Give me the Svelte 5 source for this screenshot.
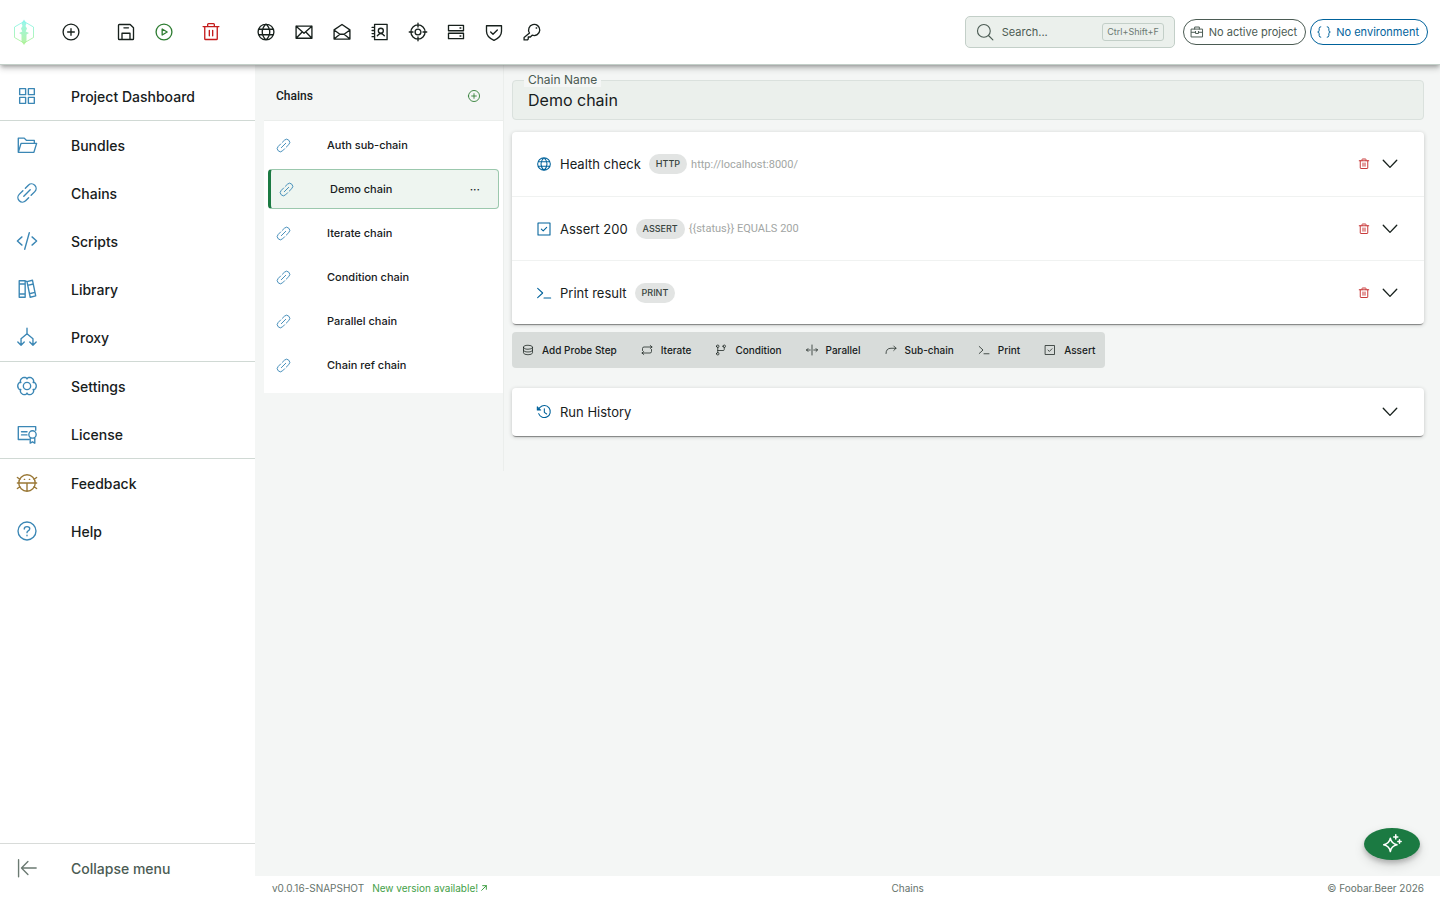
<script lang="ts">
  interface Step { name: string; icon: string; kind: string; detail: string; }

  const circle = (x: number, y: number, r: number) =>
    `M${x - r} ${y}a${r} ${r} 0 1 0 ${r * 2} 0a${r} ${r} 0 1 0 ${-r * 2} 0Z`;

  // six-lobed cog outline
  function cog() {
    const pts: string[] = [];
    for (let a = 0; a < 360; a += 5) {
      const t = (a * Math.PI) / 180;
      const r = 7.7 + 2.4 * Math.sqrt(Math.abs(Math.cos(3 * t)));
      pts.push(`${(12 + r * Math.cos(t)).toFixed(2)} ${(12 + r * Math.sin(t)).toFixed(2)}`);
    }
    return `M${pts.join('L')}Z`;
  }

  const ICONS: Record<string, string> = {
    plus: circle(12, 12, 9.5) + 'M12 8v8M8 12h8',
    save: 'M3 4q0-1 1-1H17l4 4V20q0 1-1 1H4q-1 0-1-1ZM7.2 21V13.500h9.600v7.500M9.500 7h5.500',
    play: circle(12, 12, 9.5) + 'M9.8 8.4v7.2l6-3.6Z',
    trash: 'M2.500 5.500h19M4.500 5.500V20q0 1 1 1h13q1 0 1-1V5.500M8 5.500V3q0-1 1-1h6q1 0 1 1v2.500M10 10v6.500M14 10v6.500',
    globe: circle(12, 12, 9.5) + 'M3.5 8.7h17M3.5 15.3h17M12 2.5c-6 5.5-6 13.5 0 19c6-5.5 6-13.5 0-19Z',
    mail: 'M2.500 5h19v14.500h-19ZM2.500 5l9.500 8.500L21.500 5M2.800 19.200l7-7.200M21.200 19.200l-7-7.200',
    mailOpen: 'M2.500 9.500L12 3l9.500 6.500V20.500h-19ZM2.500 9.500l7 5.200h5l7-5.200M2.800 20.200l6.700-5.500M21.200 20.200l-6.700-5.500',
    contacts: 'M5.500 2.800h15v18.400h-15ZM2.500 6.500h3M2.500 10.200h3M2.500 13.900h3M2.500 17.600h3M8.800 16.500q4.200-5.500 8.400 0' + circle(13, 10.5, 3),
    target: circle(12, 12, 8.5) + circle(12, 12, 3.5) + 'M12 1.500v4.500M12 18v4.500M1.500 12h4.500M18 12h4.500',
    server: 'M3 4h18v6.500h-18ZM3 13.500h18V20h-18ZM16.800 7.200h1M16.800 16.800h1',
    shield: 'M3 4.500h18v6.500c0 6-4.500 9-9 11c-4.500-2-9-5-9-11ZM8 12l2.800 2.800L16 9.500',
    key: 'M9 13.200a6.700 6.700 0 1 1 3.200 2.600L10 18H7.500v2.500L6.500 21.500H2.500V18.500ZM17 7.200h.6',
    search: circle(10.5, 10.5, 8.5) + 'M17 17l5.500 5.500',
    briefcase: 'M2.500 7h19v13.500h-19ZM8 7V3.500h8V7M2.500 12.500h7M14.500 12.500h7M9.500 11v3.500h5V11',
    braces: 'M6.500 3q-2.800 0-2.800 3v3q0 3-2.500 3q2.500 0 2.500 3v3q0 3 2.800 3M17.500 3q2.800 0 2.800 3v3q0 3 2.500 3q-2.500 0-2.500 3v3q0 3-2.800 3',
    grid: 'M4 4h6.500v6.500H4ZM13.500 4H20v6.500h-6.500ZM4 13.500h6.500V20H4ZM13.500 13.500H20V20h-6.500Z',
    folder: 'M2.500 20V4.500H9l2.500 2.500h8.500v3M2.500 20l3-9.800h17L19.500 20Z',
    link: 'M10.200 6.800L13.500 3.500a4.950 4.950 0 0 1 7 7L16.500 14.500M13.800 17.200L10.500 20.500a4.950 4.950 0 0 1-7-7L7.500 9.500M8.500 15.500l7-7',
    code: 'M6.500 7.500L1.500 12l5 4.500M17.500 7.500l5 4.500l-5 4.500M14.500 3l-5 18',
    books: 'M3.500 3h6.500v18H3.500ZM3.500 6.500h6.500M3.500 17.500h6.500M12 4l6-1.500l3.500 17l-6 1.500ZM12.800 8l6-1.500M14.600 17.200l6-1.500M10 3l2 1',
    split: 'M12 2.500v6M12 8.500l-6.500 5.500v7M12 8.500l6.500 5.500v7M2 17.500l3.500 3.500L9 17.500M15 17.500l3.500 3.500l3.500-3.500',
    cog: cog() + circle(12, 12, 4),
    license: 'M14 18H2.500V4h19v4M6 9.500h6M6 13h6' + circle(18, 12.5, 4) + 'M15.500 16v6l2.500-1.500l2.500 1.500V16',
    bug: circle(12, 12, 9) + 'M1.500 12h21M12 12v9M9 8h.5M14.500 8h.5M1.500 6l3 2M22.500 6l-3 2M1.500 18l3-2M22.500 18l-3-2',
    help: circle(12, 12, 9.8) + 'M9 9.800q0-2.600 3-2.600t3 2.400q0 1.400-1.700 2.200q-1.300.6-1.300 2M12 16.600v.6',
    collapse: 'M2.800 3v18.500M22 12H6.500M13 5l-7 7l7 7',
    check: 'M3 3h18v18h-18ZM8 12.200l2.800 2.600L16 9.500',
    prompt: 'M2.500 5l7.500 7l-7.500 7M12 19.500h10',
    chevron: 'M3 7L12 16.500l9-9.500',
    database: 'M3 6.500a9 4 0 0 1 18 0a9 4 0 0 1-18 0ZM3 6.500v11a9 4 0 0 0 18 0v-11M3 12a9 4 0 0 0 18 0',
    repeat: 'M3 13V9q0-3 3-3H22M18.500 3l3.500 3l-3.500 3M21 11v4q0 3-3 3H2M5.500 15l-3.500 3l3.500 3',
    branch: circle(5.5, 4.5, 2.5) + circle(18.5, 4.5, 2.5) + circle(5.5, 19.5, 2.5) + 'M5.500 7v10M18.500 7v4q0 2-2 2h-11',
    parallel: 'M12 2v20M8.500 12H1M4 9l-3 3l3 3M15.500 12h7.500M20 9l3 3l-3 3',
    forward: 'M2 19q0-10.500 10-10.500h10M17.500 4l4.500 4.500l-4.500 4.500',
    history: 'M4 14.500a9 9 0 1 0 2-9.500L3 8.500M2 4v5h5M2.500 5l3.500 3.500M12.500 7v5.500l3.500 2.500',
    sparkle: 'M10 5q1.300 6.700 8 8q-6.700 1.300-8 8q-1.300-6.700-8-8q6.700-1.300 8-8ZM16.500 1v5M14 3.500h5M21 7v4M19 9h4',
    ext: 'M5 19L19 5M8 5h11v11',
  };

  const TOOL_GROUPS = [
    [{ icon: 'plus', label: 'New', cls: '' }],
    [{ icon: 'save', label: 'Save', cls: '' }, { icon: 'play', label: 'Run', cls: 'run' }],
    [{ icon: 'trash', label: 'Delete', cls: 'danger' }],
    [
      { icon: 'globe', label: 'HTTP', cls: '' },
      { icon: 'mail', label: 'Send mail', cls: '' },
      { icon: 'mailOpen', label: 'Read mail', cls: '' },
      { icon: 'contacts', label: 'Directory', cls: '' },
      { icon: 'target', label: 'Probe', cls: '' },
      { icon: 'server', label: 'Server', cls: '' },
      { icon: 'shield', label: 'Security', cls: '' },
      { icon: 'key', label: 'Keys', cls: '' },
    ],
  ];

  const NAV = [
    [['grid', 'Project Dashboard']],
    [['folder', 'Bundles'], ['link', 'Chains'], ['code', 'Scripts'], ['books', 'Library'], ['split', 'Proxy']],
    [['cog', 'Settings'], ['license', 'License']],
    [['bug', 'Feedback'], ['help', 'Help']],
  ];

  const CHAINS = ['Auth sub-chain', 'Demo chain', 'Iterate chain', 'Condition chain', 'Parallel chain', 'Chain ref chain'];

  const ADD = [
    ['database', 'Add Probe Step'], ['repeat', 'Iterate'], ['branch', 'Condition'], ['parallel', 'Parallel'],
    ['forward', 'Sub-chain'], ['prompt', 'Print'], ['check', 'Assert'],
  ];

  let steps = $state<Step[]>([
    { name: 'Health check', icon: 'globe', kind: 'HTTP', detail: 'http://localhost:8000/' },
    { name: 'Assert 200', icon: 'check', kind: 'ASSERT', detail: '{{status}} EQUALS 200' },
    { name: 'Print result', icon: 'prompt', kind: 'PRINT', detail: '' },
  ]);
  let selected = $state('Demo chain');
  let chainName = $state('Demo chain');

  function select(name: string) { selected = name; chainName = name; }
  function removeStep(i: number) { steps.splice(i, 1); }
</script>

{#snippet icon(name: string)}
  <svg class="icon" viewBox="0 0 24 24" aria-hidden="true"><path d={ICONS[name]} /></svg>
{/snippet}

<div class="app">
  <header class="top">
    <svg class="logo" viewBox="0 0 24 28" aria-hidden="true">
      <defs>
        <linearGradient id="lg" x1="0" y1="0" x2="0" y2="1">
          <stop offset="0" stop-color="#7df5ee" /><stop offset="1" stop-color="#a8f08a" />
        </linearGradient>
      </defs>
      <path class="logo__hex" d="M12 3.500L21.500 9V19.500L12 25L2.500 19.500V9Z" />
      <path class="logo__blade" d="M12 1.500l2.500 4-1 2.500 1.500 2.500-1.300 3 3.300 1.500-2.500 1.500v7l-2.500 3.500-2.500-3.500v-7L7 15l3.300-1.500-1.300-3L10.500 8 9.500 5.500Z" />
    </svg>
    <div class="tools">
      {#each TOOL_GROUPS as group}
        <div class="tools__group">
          {#each group as t}
            <button class="tool {t.cls}" aria-label={t.label}>{@render icon(t.icon)}</button>
          {/each}
        </div>
      {/each}
    </div>
    <button class="search">
      {@render icon('search')}
      <span class="search__text">Search...</span>
      <kbd>Ctrl+Shift+F</kbd>
    </button>
    <div class="pills">
      <button class="pill">{@render icon('briefcase')}No active project</button>
      <button class="pill pill--env">{@render icon('braces')}No environment</button>
    </div>
  </header>

  <div class="body">
    <nav class="side">
      {#each NAV as group}
        <div class="side__group">
          {#each group as [ic, label]}
            <a class="side__item" class:bug={ic === 'bug'} href="#{label}">{@render icon(ic)}{label}</a>
          {/each}
        </div>
      {/each}
      <button class="side__item side__collapse">{@render icon('collapse')}Collapse menu</button>
    </nav>

    <div class="content">
      <div class="work">
        <section class="chains">
          <div class="chains__head">
            <h2>Chains</h2>
            <button class="chains__add" aria-label="Add chain">{@render icon('plus')}</button>
          </div>
          <ul class="chains__list">
            {#each CHAINS as name}
              <li class="chain" class:sel={name === selected}>
                <button class="chain__name" onclick={() => select(name)}>{@render icon('link')}{name}</button>
                {#if name === selected}<button class="chain__more" aria-label="More">···</button>{/if}
              </li>
            {/each}
          </ul>
        </section>

        <main class="editor">
          <div class="field">
            <label for="chain-name">Chain Name</label>
            <input id="chain-name" type="text" bind:value={chainName} />
          </div>

          <div class="card">
            {#each steps as step, i}
              <div class="step">
                {@render icon(step.icon)}
                <span class="step__name">{step.name}</span>
                <span class="step__kind">{step.kind}</span>
                <span class="step__detail">{step.detail}</span>
                <button class="step__del" aria-label="Delete step" onclick={() => removeStep(i)}>{@render icon('trash')}</button>
                <button class="step__open" aria-label="Expand">{@render icon('chevron')}</button>
              </div>
            {/each}
          </div>

          <div class="adders">
            {#each ADD as [ic, label]}
              <button class="adder">{@render icon(ic)}{label}</button>
            {/each}
          </div>

          <div class="card">
            <div class="step step--history">
              {@render icon('history')}
              <span class="step__name">Run History</span>
              <span class="step__detail"></span>
              <button class="step__open" aria-label="Expand history">{@render icon('chevron')}</button>
            </div>
          </div>
        </main>
      </div>

      <footer class="foot">
        <div class="foot__left">
          <span>v0.0.16-SNAPSHOT</span>
          <a href="#release">New version available!{@render icon('ext')}</a>
        </div>
        <span>Chains</span>
        <span>© Foobar.Beer 2026</span>
      </footer>
    </div>
  </div>

  <button class="fab" aria-label="Assistant">{@render icon('sparkle')}</button>
</div>

<style>
  :global(body) { margin:0; }
  .app, .app * { box-sizing:border-box; }
  .app {
    min-height:100vh; display:flex; flex-direction:column;
    background:#f4f6f5; color:#17201c; font-family:Inter,'Liberation Sans',sans-serif; font-size:12px;
  }
  button { font:inherit; color:inherit; background:none; border:0; padding:0; margin:0; cursor:pointer; }
  a { color:inherit; text-decoration:none; }
  .icon {
    width:20px; height:20px; flex:none; display:block;
    fill:none; stroke:currentColor; stroke-width:1.5; stroke-linejoin:round; stroke-linecap:round;
  }

  /* Top bar */
  .top {
    position:relative; z-index:2; display:flex; align-items:center; height:65px; padding:0 12px;
    background:#fff; border-bottom:1px solid #c3cfc8;
    box-shadow:0 2px 4px -1px rgba(0,0,0,.3), 0 4px 6px rgba(0,0,0,.16);
  }
  .logo { width:24px; height:28px; margin-right:16px; }
  .logo__hex { fill:none; stroke:url(#lg); stroke-width:1; opacity:.8; }
  .logo__blade { fill:url(#lg); opacity:.8; }
  .tools { display:flex; flex:1; }
  .tools__group { display:flex; margin-right:17px; }
  .tools__group:nth-child(2) { margin-right:9px; }
  .tool { width:38px; height:38px; display:flex; align-items:center; justify-content:center; }
  .tool .icon { stroke-width:1.6; }
  .run { color:#2e7d32; }
  .danger { color:#c41c1c; }

  .search {
    display:flex; align-items:center; gap:8px; width:210px; height:32px; padding:0 10px;
    background:#ebf0ec; border:1px solid #c3cfc8; border-radius:5px; color:#4b5b53;
  }
  .search .icon { width:18px; height:18px; }
  .search__text { flex:1; text-align:left; font-size:11px; }
  kbd { font:inherit; font-size:9px; line-height:16px; padding:0 4px; border:1px solid #c3cfc8; border-radius:3px; color:#6b7a72; }
  .pills { display:flex; gap:4px; margin-left:8px; }
  .pill {
    display:flex; align-items:center; gap:5px; height:26px; padding:0 8px 0 6px;
    border:1px solid #4b5b53; border-radius:13px; color:#4b5b53; font-size:11px; white-space:nowrap;
  }
  .pill .icon { width:14px; height:14px; stroke-width:1.7; }
  .pill--env { color:#00629b; border-color:#00629b; }

  .body { flex:1; display:flex; }

  /* Side navigation */
  .side { width:255px; flex:none; display:flex; flex-direction:column; padding:7px 0 8px; background:#fff; }
  .side__group + .side__group { border-top:1px solid #d0d9d4; }
  .side__item {
    display:flex; align-items:center; gap:33px; width:100%; height:48px; padding:0 16px;
    font-size:14px; font-weight:500;
  }
  .side__item .icon { width:22px; height:22px; color:#3b87b5; }
  .side__item.bug .icon { color:#9a7836; }
  .side__collapse { height:49px; margin-top:auto; border-top:1px solid #d8dbd9; color:#4b5b53; }
  .side__collapse .icon { color:#6b7a72; }

  .content { flex:1; min-width:0; display:flex; flex-direction:column; }
  .work { flex:1; display:flex; align-items:flex-start; }

  /* Chain list */
  .chains { width:249px; flex:none; min-height:406px; padding:7px 0 0 9px; border-right:1px solid #ebeeec; }
  .chains__head { display:flex; align-items:center; justify-content:space-between; height:49px; padding:0 20px 0 12px; border-bottom:1px solid #ebeeec; }
  h2 { margin:0; font:500 12px Roboto,sans-serif; }
  .chains__add { color:#2e7d32; padding:2px; }
  .chains__add .icon { width:14px; height:14px; }
  .chains__list { list-style:none; margin:0; padding:4px 4px 8px; display:flex; flex-direction:column; gap:4px; background:#fff; }
  .chain { display:flex; align-items:center; height:40px; border-radius:4px; padding-right:18px; }
  .chain.sel { background:#eef5f0; border:1px solid #9bc8ad; border-left:3px solid #1b7a42; }
  .chain__name { flex:1; height:100%; display:flex; align-items:center; gap:36px; padding:0 8px; font-size:11px; font-weight:500; text-align:left; }
  .chain__name .icon { width:15px; height:15px; color:#3b87b5; }
  .chain__more { font-size:12px; }

  /* Chain editor */
  .editor { flex:1; min-width:0; padding:15px 16px 8px 8px; }
  .field { position:relative; margin-bottom:12px; }
  .field label { position:absolute; top:-8px; left:12px; padding:0 4px; background:#f4f6f5; font-size:12px; line-height:15px; color:#4b5b53; }
  .field input {
    display:block; width:100%; height:40px; padding:0 15px; border:1px solid #dae1dd; border-radius:4px;
    background:#ebf0ec; font:16px Inter,sans-serif; color:#17201c;
  }
  .card { background:#fff; border-radius:4px; box-shadow:0 2px 1px -1px rgba(0,0,0,.4), 0 1px 4px rgba(0,0,0,.2); }
  .step { display:flex; align-items:center; height:64px; padding:0 24px; }
  .step + .step { border-top:1px solid #f0f2f1; }
  .step--history { height:48px; }
  .step > .icon { width:16px; height:16px; color:#00629b; stroke-width:1.6; }
  .step__name { margin-left:8px; font-size:13px; }
  .step__kind { margin-left:8px; padding:0 7px; border-radius:10px; background:#e2e4e3; font-size:9px; font-weight:500; line-height:20px; color:#37433d; }
  .step__detail { flex:1; margin-left:4px; font:11px Roboto,sans-serif; color:#a2a6a4; }
  .step__del { color:#c93b3b; padding:4px; }
  .step__del .icon { width:12px; height:12px; stroke-width:2; }
  .step__open { margin-left:6px; padding:1px; }
  .step__open .icon { width:18px; height:18px; stroke-width:1.8; }

  .adders { display:flex; gap:4px; width:fit-content; margin:8px 0 20px; background:#d8dcda; border-radius:4px; }
  .adder { display:flex; align-items:center; gap:8px; height:36px; padding:0 10px; font-size:10px; font-weight:500; white-space:nowrap; }
  .adder .icon { width:12px; height:12px; }

  /* Footer */
  .foot { display:flex; align-items:center; justify-content:space-between; height:24px; padding:0 16px 0 17px; background:#fff; font-size:10px; color:#66736c; }
  .foot__left { display:flex; gap:8px; }
  .foot__left a { display:flex; align-items:center; gap:2px; color:#43a047; }
  .foot__left .icon { width:8px; height:8px; stroke-width:3; }

  .fab {
    position:fixed; right:20px; bottom:40px; z-index:3; width:56px; height:32px; border-radius:50%;
    display:flex; align-items:center; justify-content:center; background:#1b7a42; color:#fff;
    box-shadow:0 3px 5px rgba(0,0,0,.2), 0 5px 12px rgba(0,0,0,.14);
  }
  .fab .icon { stroke-width:1.8; }
</style>
